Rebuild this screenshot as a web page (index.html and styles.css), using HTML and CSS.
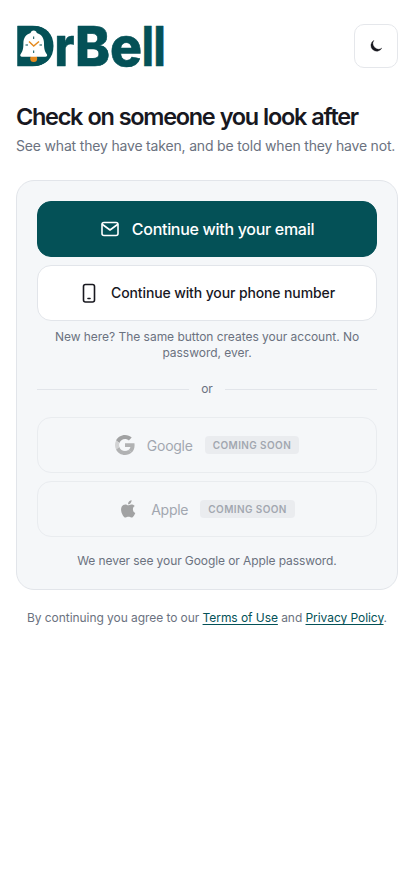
FILE: index.html
```html
<!DOCTYPE html>
<html lang="en">
<head>
<meta charset="utf-8">
<meta name="viewport" content="width=device-width, initial-scale=1">
<title>DrBell</title>
<link rel="stylesheet" href="styles.css">
</head>
<body>
<main class="page">
  <header class="top">
    <svg class="logo" width="148" height="44" viewBox="0 0 148 44" role="img" aria-label="DrBell">
      <g class="word">
        <text x="-1.500" y="42" textLength="40" lengthAdjust="spacingAndGlyphs">D</text>
        <text x="38.500" y="42" textLength="20" lengthAdjust="spacingAndGlyphs">r</text>
        <text x="59" y="42" textLength="35" lengthAdjust="spacingAndGlyphs">B</text>
        <text x="94" y="42" textLength="32" lengthAdjust="spacingAndGlyphs">e</text>
        <text x="126" y="42" textLength="23.500" lengthAdjust="spacingAndGlyphs">ll</text>
      </g>
      <path class="brand" d="M4 2H17C30 2 37.500 10 37.500 22S30 42 17 42H4Z"/>
      <circle class="orange" cx="17.700" cy="34.500" r="3.500"/>
      <path class="bell" d="M17.700 6.500c1.800 0 2.800 1 3.100 2.600 5 1.400 7.200 5.400 7.200 10.200 0 6 .8 8 2.700 10.700 1 1.200.4 2.800-1.300 2.800H6c-1.700 0-2.300-1.600-1.300-2.800 1.900-2.700 2.700-4.700 2.700-10.700 0-4.800 2.200-8.800 7.200-10.200.3-1.600 1.300-2.600 3.100-2.600Z"/>
      <path class="tick" d="M17.700 12.500v2.500M17.700 26.500v2.500M9.500 21h2.500M23.500 21h2.500"/>
      <path class="hands" d="M13 17.500l4.700 4.500 5.300-4.500"/>
    </svg>
    <button class="theme" aria-label="Theme"><svg width="14" height="14" viewBox="0 0 14 14"><path d="M5 1.300A5.800 5.800 0 1 0 12.900 9 5.600 5.600 0 0 1 5 1.300Z"/></svg></button>
  </header>
  <h1>Check on someone you look after</h1>
  <p class="lead">See what they have taken, and be told when they have not.</p>
  <section class="card">
    <button class="btn primary"><svg class="line" width="20" height="20" viewBox="0 0 20 20"><rect x="2" y="3.500" width="16" height="13" rx="2"/><path d="M2.500 5.500 10 11l7.500-5.500"/></svg><span>Continue with your email</span></button>
    <button class="btn tel"><svg class="line phone" width="20" height="20" viewBox="0 0 20 20"><rect x="4.500" y="1.500" width="11" height="17.500" rx="2"/><path d="M9 15.500h2"/></svg><span>Continue with your phone number</span></button>
    <p class="note">New here? The same button creates your account. No password, ever.</p>
    <div class="or"><span>or</span></div>
    <button class="btn off" disabled><svg width="20" height="20" viewBox="0 0 48 48"><path fill="#6b6b6b" d="M24 9.500c3.540 0 6.710 1.220 9.210 3.600l6.850-6.850C35.900 2.380 30.470 0 24 0 14.620 0 6.510 5.380 2.560 13.220l7.980 6.190C12.430 13.720 17.740 9.500 24 9.500z"/><path fill="#858585" d="M46.980 24.550c0-1.570-.15-3.090-.38-4.550H24v9.020h12.940c-.58 2.960-2.260 5.480-4.780 7.180l7.730 6c4.510-4.180 7.090-10.360 7.090-17.650z"/><path fill="#bcbcbc" d="M10.530 28.590c-.48-1.450-.76-2.990-.76-4.590s.27-3.140.76-4.590l-7.980-6.190C.92 16.460 0 20.120 0 24s.92 7.540 2.560 10.780l7.970-6.190z"/><path fill="#858585" d="M24 48c6.480 0 11.930-2.130 15.890-5.810l-7.730-6c-2.150 1.450-4.920 2.300-8.160 2.300-6.260 0-11.570-4.220-13.470-9.910l-7.980 6.190C6.510 42.620 14.620 48 24 48z"/></svg><span>Google</span><b>Coming soon</b></button>
    <button class="btn off apple" disabled><svg width="20" height="20" viewBox="-1 -1 26 26"><path fill="#6b6b6b" d="M17.050 12.540c-.03-2.850 2.330-4.220 2.440-4.290-1.330-1.940-3.400-2.210-4.130-2.240-1.760-.18-3.430 1.040-4.330 1.040-.89 0-2.270-1.010-3.730-.98-1.920.03-3.690 1.120-4.680 2.830-2 3.460-.51 8.590 1.430 11.400.95 1.370 2.090 2.920 3.580 2.860 1.440-.06 1.980-.93 3.720-.93s2.230.93 3.750.9c1.550-.03 2.530-1.400 3.480-2.780 1.100-1.600 1.550-3.150 1.580-3.230-.03-.02-3.030-1.160-3.060-4.610zM14.190 4.160c.79-.96 1.330-2.290 1.180-3.620-1.140.05-2.520.76-3.340 1.720-.73.85-1.380 2.210-1.200 3.510 1.270.1 2.570-.65 3.360-1.610z"/></svg><span>Apple</span><b>Coming soon</b></button>
    <p class="note last">We never see your Google or Apple password.</p>
  </section>
  <p class="legal">By continuing you agree to our <a href="#">Terms of Use</a> and <a href="#">Privacy Policy</a>.</p>
</main>
</body>
</html>
```
FILE: styles.css
```css
* { box-sizing: border-box; }
body { margin: 0; background: #fff; color: #18181f; font-family: Inter, sans-serif; }
button { font: inherit; color: inherit; }
svg { display: block; flex: none; }
.page { padding: 24px 16px; }
.top { display: flex; justify-content: space-between; align-items: center; height: 44px; }
.logo { overflow: visible; }
.word { font-family: Inter, sans-serif; font-size: 55px; font-weight: 800; fill: #045157; stroke: #045157; stroke-width: .6; stroke-linejoin: round; }
.brand { fill: #045157; }
.bell { fill: #fff; }
.orange { fill: #e58a1f; }
.tick { stroke: #045157; stroke-width: 1; }
.hands { fill: none; stroke: #e58a1f; stroke-width: 1.500; }
.theme { width: 44px; height: 44px; padding: 0; border: 1px solid #e5e7eb; border-radius: 10px; background: #fff; display: grid; place-items: center; }
.theme path { fill: #18181f; stroke: #18181f; stroke-width: .3; stroke-linejoin: round; }
h1 { margin: 32px 0 0; font-size: 23.500px; line-height: 34px; font-weight: 600; letter-spacing: -1.300px; word-spacing: .6px; white-space: nowrap; }
.lead { margin: 2px 0 24px; font-size: 14px; line-height: 20px; letter-spacing: -.18px; color: #6b7280; white-space: nowrap; }
.card { height: 410px; padding: 20px; border: 1px solid #e2e5ea; border-radius: 18px; background: #f5f7f9; }
.btn { display: flex; align-items: center; justify-content: center; gap: 12px; width: 100%; height: 56px; margin: 0 0 8px; padding: 0; border: 1px solid #e2e5ea; border-radius: 14px; background: #fff; font-size: 14px; font-weight: 500; letter-spacing: -.12px; }
.primary { background: #045157; border-color: #045157; color: #fff; font-size: 16px; letter-spacing: -.3px; }
.line { fill: none; stroke: currentColor; stroke-width: 1.600; stroke-linecap: round; stroke-linejoin: round; }
.note { margin: 0; text-align: center; font-size: 12px; line-height: 16px; letter-spacing: -.03px; color: #6b7280; }
.or { display: flex; align-items: center; gap: 12px; margin: 20px 0; height: 16px; font-size: 12px; line-height: 16px; color: #6b7280; }
.or span { padding-bottom: 1px; }
.or::before, .or::after { content: ""; flex: 1; height: 1px; background: #e2e5ea; }
.off { opacity: .6; background: transparent; color: #6b7280; font-weight: 400; letter-spacing: -.25px; }
.off b { height: 18px; padding: 0 8px; border-radius: 4px; background: #e4e6ea; font-size: 10px; line-height: 18px; font-weight: 600; letter-spacing: .4px; text-transform: uppercase; }
.tel { padding-bottom: 1px; }
.last { margin-top: 16px; letter-spacing: -.09px; }
.legal { margin: 20px 0 0; text-align: center; font-size: 12px; line-height: 16px; letter-spacing: -.06px; color: #6b7280; }
.legal a { color: #045157; text-underline-offset: 2px; }
```
